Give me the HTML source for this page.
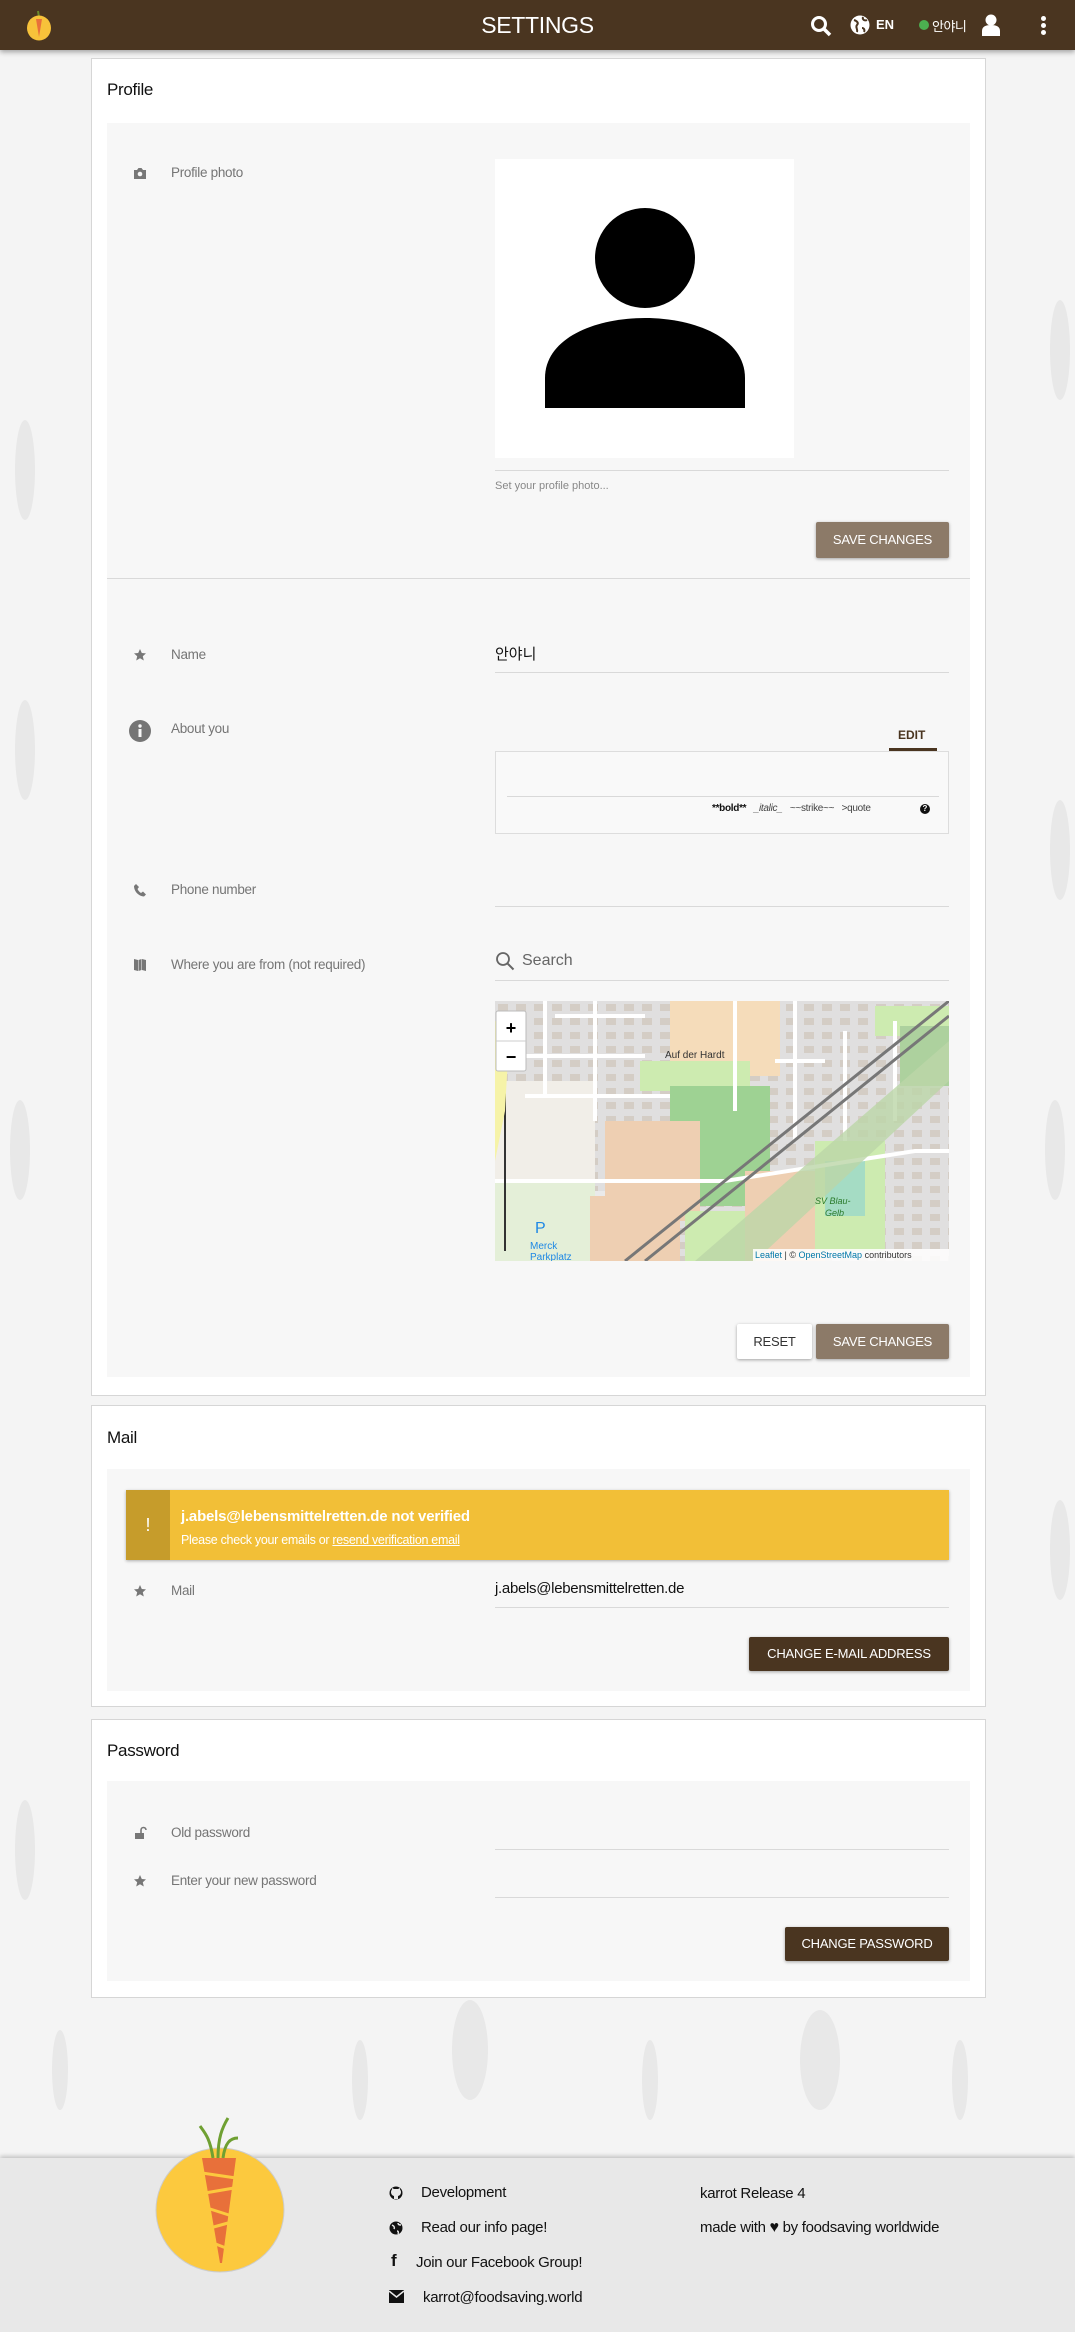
<!DOCTYPE html>
<html><head><meta charset="utf-8">
<style>
*{box-sizing:border-box;margin:0;padding:0}
body{width:1075px;height:2332px;background:#f4f4f4;font-family:"Liberation Sans","Noto Sans CJK KR",sans-serif;position:relative;overflow:hidden;color:#222}
.a{position:absolute}
.hdr{left:0;top:0;width:1075px;height:50px;background:#4a3520;box-shadow:0 2px 5px rgba(0,0,0,.35);z-index:5}
.card{background:#fff;border:1px solid #d6d6d6}
.sec{background:#f7f7f7}
.ttl{font-size:17px;color:#111;letter-spacing:-.3px}
.lbl{font-size:13.5px;color:#757575;letter-spacing:-.3px}
.ico{width:14px;height:14px;fill:#777}
.line{height:1px;background:#d9d9d9}
.btn{font-size:13px;color:#fff;text-align:center;letter-spacing:-.2px;box-shadow:0 1px 3px rgba(0,0,0,.35);border-radius:2px}
.lt{background:#8c7a68}
.dk{background:#4a3520}
.ft{font-size:15px;color:#111;letter-spacing:-.3px}
</style></head><body>
<svg class="a" style="left:0;top:50px" width="1075" height="2108">
<g fill="#e8e8e8">
<ellipse cx="25" cy="420" rx="10" ry="50"/><ellipse cx="1060" cy="300" rx="10" ry="50"/><ellipse cx="20" cy="1100" rx="10" ry="50"/><ellipse cx="1060" cy="1500" rx="10" ry="50"/>
<ellipse cx="60" cy="2020" rx="8" ry="40"/><ellipse cx="360" cy="2030" rx="8" ry="40"/><ellipse cx="470" cy="2000" rx="18" ry="50"/><ellipse cx="650" cy="2030" rx="8" ry="40"/><ellipse cx="820" cy="2010" rx="20" ry="50"/><ellipse cx="960" cy="2030" rx="8" ry="40"/>
<ellipse cx="1060" cy="800" rx="10" ry="50"/><ellipse cx="25" cy="1800" rx="10" ry="50"/><ellipse cx="25" cy="700" rx="10" ry="50"/><ellipse cx="1055" cy="1100" rx="10" ry="50"/>
</g></svg>

<div class="a hdr">
 <svg class="a" style="left:26px;top:9px" width="26" height="32" viewBox="0 0 26 32"><path d="M12 2 l1 6" stroke="#6a8a2a" stroke-width="2"/><ellipse cx="13" cy="19" rx="12" ry="12.5" fill="#f7c23a"/><path d="M10 10 h6 l-3 18z" fill="#e8703a"/></svg>
 <div class="a" style="left:0;width:1075px;top:12px;text-align:center;color:#fff;font-size:23px;letter-spacing:-.3px">SETTINGS</div>
 <svg class="a" style="left:810px;top:15px" width="22" height="22" viewBox="0 0 22 22"><circle cx="9" cy="9" r="6.5" fill="none" stroke="#fff" stroke-width="3"/><path d="M14 14l6 6" stroke="#fff" stroke-width="3.5"/></svg>
 <svg class="a" style="left:850px;top:15px" width="20" height="20" viewBox="0 0 20 20"><circle cx="10" cy="10" r="9.5" fill="#fff"/><path d="M4 5c3 1 5 3 3 5s1 4 0 7M13 2c-1 3 2 4 4 3M12 13c2 0 3 2 2 4" stroke="#4a3520" stroke-width="2" fill="none"/></svg>
 <div class="a" style="left:876px;top:17px;color:#fff;font-size:13px;font-weight:bold">EN</div>
 <div class="a" style="left:919px;top:20px;width:10px;height:10px;border-radius:50%;background:#4caf50"></div>
 <div class="a" style="left:932px;top:16px;color:#fff;font-size:13px;letter-spacing:-.5px">안야니</div>
 <svg class="a" style="left:982px;top:14px" width="18" height="22" viewBox="0 0 18 22"><circle cx="9" cy="6" r="5.5" fill="#fff"/><path d="M0 22v-5c0-4 3-6 9-6s9 2 9 6v5z" fill="#fff"/></svg>
 <div class="a" style="left:1041px;top:16px;width:5px;height:5px;background:#fff;border-radius:50%;box-shadow:0 7px 0 #fff,0 14px 0 #fff"></div>
</div>

<div class="a card" style="left:91px;top:58px;width:895px;height:1338px"></div>
<div class="a ttl" style="left:107px;top:80px">Profile</div>
<div class="a sec" style="left:107px;top:123px;width:863px;height:455px"></div>
<div class="a line" style="left:107px;top:578px;width:863px"></div>
<div class="a sec" style="left:107px;top:579px;width:863px;height:798px"></div>

<svg class="a ico" style="left:133px;top:166px" viewBox="0 0 14 14"><path d="M1 4h3l1.5-2h3L10 4h3v9H1z"/><circle cx="7" cy="8" r="2.3" fill="#f7f7f7"/></svg>
<div class="a lbl" style="left:171px;top:165px">Profile photo</div>
<div class="a" style="left:495px;top:159px;width:299px;height:299px;background:#fff"></div>
<svg class="a" style="left:545px;top:208px" width="200" height="200" viewBox="0 0 200 200"><circle cx="100" cy="50" r="50"/><path d="M0 200v-30c0-40 50-60 100-60s100 20 100 60v30z"/></svg>
<div class="a line" style="left:495px;top:470px;width:454px"></div>
<div class="a" style="left:495px;top:480px;font-size:11px;color:#888">Set your profile photo...</div>
<div class="a btn lt" style="left:816px;top:522px;width:133px;height:36px;line-height:36px">SAVE CHANGES</div>

<svg class="a ico" style="left:133px;top:648px" viewBox="0 0 14 14"><path d="M7 1l1.8 4 4.2.4-3.2 2.8 1 4.3L7 10.2 3.2 12.5l1-4.3L1 5.4l4.2-.4z"/></svg>
<div class="a lbl" style="left:171px;top:647px">Name</div>
<div class="a" style="left:495px;top:643px;font-size:15px;color:#111">안야니</div>
<div class="a line" style="left:495px;top:672px;width:454px"></div>

<svg class="a" style="left:129px;top:720px" width="22" height="22" viewBox="0 0 22 22"><circle cx="11" cy="11" r="11" fill="#757575"/><rect x="9.5" y="9" width="3" height="8" fill="#f7f7f7"/><circle cx="11" cy="6" r="1.7" fill="#f7f7f7"/></svg>
<div class="a lbl" style="left:171px;top:721px">About you</div>
<div class="a" style="left:898px;top:728px;font-size:12px;color:#4a3520;font-weight:bold">EDIT</div>
<div class="a" style="left:889px;top:748px;width:48px;height:3px;background:#4a3520"></div>
<div class="a" style="left:495px;top:751px;width:454px;height:83px;border:1px solid #ddd;background:#f9f9f9"></div>
<div class="a line" style="left:507px;top:796px;width:432px"></div>
<div class="a" style="left:712px;top:803px;font-size:10px;color:#444;white-space:nowrap;letter-spacing:-.3px"><b style="color:#111">**bold**</b> &nbsp; <i>_italic_</i> &nbsp; ~~strike~~ &nbsp; &gt;quote</div>
<div class="a" style="left:920px;top:804px;width:10px;height:10px;border-radius:50%;background:#111;color:#fff;font-size:8px;text-align:center;line-height:10px;font-weight:bold">?</div>

<svg class="a ico" style="left:133px;top:883px" viewBox="0 0 14 14"><path d="M3 1l3 3-1.5 2c1 2 2 3 3.5 4l2-1.5 3 3-2 2C5 13 1 8 1 3z"/></svg>
<div class="a lbl" style="left:171px;top:882px">Phone number</div>
<div class="a line" style="left:495px;top:906px;width:454px"></div>

<svg class="a ico" style="left:133px;top:957px" viewBox="0 0 14 14"><path d="M1 2l4 1v11l-4-1zM5.5 3l3-1v11l-3 1zM9 2l4 1v11l-4-1z"/></svg>
<div class="a lbl" style="left:171px;top:957px">Where you are from (not required)</div>
<svg class="a" style="left:495px;top:951px" width="20" height="20" viewBox="0 0 20 20"><circle cx="8" cy="8" r="6" fill="none" stroke="#666" stroke-width="1.8"/><path d="M12.5 12.5l6 6" stroke="#666" stroke-width="2"/></svg>
<div class="a" style="left:522px;top:952px;font-size:16px;color:#666">Search</div>
<div class="a line" style="left:495px;top:980px;width:454px"></div>

<svg class="a" style="left:495px;top:1001px" width="454" height="260" viewBox="0 0 454 260">
<defs><pattern id="bl" width="18" height="14" patternUnits="userSpaceOnUse"><rect width="18" height="14" fill="#e0dfdf"/><rect x="3" y="3" width="10" height="7" fill="#d4cdc5"/></pattern></defs>
<rect width="454" height="260" fill="url(#bl)"/>
<rect x="0" y="80" width="100" height="180" fill="#f1eee8"/>
<rect x="60" y="190" width="70" height="70" fill="#eaeaea"/>
<rect x="175" y="0" width="110" height="75" fill="#f5dcba"/>
<rect x="145" y="60" width="110" height="30" fill="#cdebb0"/>
<rect x="175" y="85" width="100" height="120" fill="#9ed293"/>
<rect x="110" y="120" width="95" height="100" fill="#eecfb2"/>
<rect x="0" y="180" width="100" height="80" fill="#e4efd8"/>
<rect x="95" y="195" width="90" height="65" fill="#eecfb2"/>
<rect x="190" y="210" width="60" height="50" fill="#cdebb0"/>
<rect x="250" y="170" width="80" height="90" fill="#eecfb2"/>
<rect x="320" y="140" width="70" height="110" fill="#cdebb0"/>
<rect x="330" y="160" width="40" height="55" fill="#a5dcc4"/>
<rect x="380" y="5" width="74" height="30" fill="#cdebb0"/>
<rect x="405" y="25" width="49" height="60" fill="#add19e"/>
<g stroke="#fff" stroke-width="4" fill="none">
<path d="M0 55 H150 M30 95 H175 M0 180 H230 L420 150 H454 M60 15 H150 M50 0 L50 95 M100 0 V120 M240 0 V110 M280 60 H330 M300 0 V140 M350 30 V140 M400 20 V120"/>
</g>
<path d="M200 260 L454 40 L454 80 L260 260Z" fill="#bcd6a8" opacity=".8"/>
<g stroke="#777" stroke-width="3" fill="none"><path d="M130 260 L454 0 M150 260 L454 15"/></g>
<path d="M10 50 V250" stroke="#333" stroke-width="2"/>
<path d="M0 20 L15 20 L10 110 L0 160Z" fill="#f6f3a8"/>
<rect x="1" y="10" width="30" height="60" fill="#fff" stroke="#bbb" rx="2"/>
<line x1="1" y1="40" x2="31" y2="40" stroke="#ccc"/>
<text x="16" y="33" text-anchor="middle" font-size="18" font-family="Liberation Sans" font-weight="bold">+</text>
<text x="16" y="62" text-anchor="middle" font-size="18" font-family="Liberation Sans" font-weight="bold">−</text>
<text x="40" y="232" font-size="16" fill="#1e88e5" font-family="Liberation Sans">P</text>
<text x="35" y="248" font-size="10" fill="#1e88e5" font-family="Liberation Sans">Merck</text>
<text x="35" y="259" font-size="10" fill="#1e88e5" font-family="Liberation Sans">Parkplatz</text>
<text x="170" y="57" font-size="10" fill="#333" font-family="Liberation Sans">Auf der Hardt</text>
<text x="320" y="203" font-size="9" fill="#2a7a2a" font-style="italic" font-family="Liberation Sans">SV Blau-</text>
<text x="330" y="215" font-size="9" fill="#2a7a2a" font-style="italic" font-family="Liberation Sans">Gelb</text>
<rect x="258" y="248" width="196" height="12" fill="#fff" opacity=".85"/>
<text x="260" y="257" font-size="9" fill="#333" font-family="Liberation Sans"><tspan fill="#0078a8">Leaflet</tspan> | © <tspan fill="#0078a8">OpenStreetMap</tspan> contributors</text>
</svg>

<div class="a btn" style="left:737px;top:1324px;width:75px;height:35px;line-height:35px;background:#fff;color:#333">RESET</div>
<div class="a btn lt" style="left:816px;top:1324px;width:133px;height:35px;line-height:35px">SAVE CHANGES</div>

<div class="a card" style="left:91px;top:1405px;width:895px;height:302px"></div>
<div class="a ttl" style="left:107px;top:1428px">Mail</div>
<div class="a sec" style="left:107px;top:1469px;width:863px;height:222px"></div>
<div class="a" style="left:126px;top:1490px;width:823px;height:70px;background:#f2bf37;box-shadow:0 1px 3px rgba(0,0,0,.3)"></div>
<div class="a" style="left:126px;top:1490px;width:44px;height:70px;background:#c69c2b;color:#fff;font-size:18px;text-align:center;line-height:70px">!</div>
<div class="a" style="left:181px;top:1508px;color:#fff;font-size:15px;font-weight:bold;letter-spacing:-.2px">j.abels@lebensmittelretten.de not verified</div>
<div class="a" style="left:181px;top:1533px;color:#fff;font-size:12.5px;letter-spacing:-.3px">Please check your emails or <u>resend verification email</u></div>
<svg class="a ico" style="left:133px;top:1584px" viewBox="0 0 14 14"><path d="M7 1l1.8 4 4.2.4-3.2 2.8 1 4.3L7 10.2 3.2 12.5l1-4.3L1 5.4l4.2-.4z"/></svg>
<div class="a lbl" style="left:171px;top:1583px">Mail</div>
<div class="a" style="left:495px;top:1580px;font-size:15px;color:#111;letter-spacing:-.3px">j.abels@lebensmittelretten.de</div>
<div class="a line" style="left:495px;top:1607px;width:454px"></div>
<div class="a btn dk" style="left:749px;top:1637px;width:200px;height:34px;line-height:34px">CHANGE E-MAIL ADDRESS</div>

<div class="a card" style="left:91px;top:1719px;width:895px;height:279px"></div>
<div class="a ttl" style="left:107px;top:1741px">Password</div>
<div class="a sec" style="left:107px;top:1781px;width:863px;height:200px"></div>
<svg class="a ico" style="left:133px;top:1826px" viewBox="0 0 14 14"><path d="M2 7h9v6H2z"/><path d="M8 7V4a2.5 2.5 0 015 0" fill="none" stroke="#777" stroke-width="1.6"/></svg>
<div class="a lbl" style="left:171px;top:1825px">Old password</div>
<div class="a line" style="left:495px;top:1849px;width:454px"></div>
<svg class="a ico" style="left:133px;top:1874px" viewBox="0 0 14 14"><path d="M7 1l1.8 4 4.2.4-3.2 2.8 1 4.3L7 10.2 3.2 12.5l1-4.3L1 5.4l4.2-.4z"/></svg>
<div class="a lbl" style="left:171px;top:1873px">Enter your new password</div>
<div class="a line" style="left:495px;top:1897px;width:454px"></div>
<div class="a btn dk" style="left:785px;top:1927px;width:164px;height:34px;line-height:34px">CHANGE PASSWORD</div>

<div class="a" style="left:0;top:2158px;width:1075px;height:174px;background:#e8e8e8;box-shadow:0 -2px 4px rgba(0,0,0,.2)"></div>
<svg class="a" style="left:150px;top:2108px" width="140" height="175" viewBox="0 0 140 175">
<ellipse cx="70" cy="102" rx="64" ry="62" fill="#fcc93e" stroke="#ccc" stroke-width="1"/>
<path d="M63 50 C60 30 55 25 50 18 M68 50 C68 30 72 20 78 10 M73 50 C75 35 80 30 88 30" stroke="#6fa032" stroke-width="3" fill="none"/>
<path d="M52 50 H86 L72 155 H70Z" fill="#e8703a"/>
<g stroke="#fcc93e" stroke-width="3"><path d="M52 65 L86 70 M55 85 L84 80 M57 100 L82 108 M60 120 L78 115 M63 135 L76 140"/></g>
</svg>
<svg class="a" style="left:389px;top:2186px" width="14" height="14" viewBox="0 0 14 14"><circle cx="7" cy="7" r="6.5" fill="#111"/><path d="M5 13v-3c-2-.5-3-2-3-4 0-1 .5-2 1-2.5V2l2 1h4l2-1v1.5c.5.5 1 1.5 1 2.5 0 2-1 3.5-3 4v3" fill="#e8e8e8"/></svg>
<div class="a ft" style="left:421px;top:2184px">Development</div>
<svg class="a" style="left:389px;top:2221px" width="14" height="14" viewBox="0 0 14 14"><circle cx="7" cy="7" r="6.5" fill="#111"/><path d="M3 4c2 1 3 2 2 4M9 2c0 2 2 2 3 2M8 10c1 0 2 1 1 3" stroke="#e8e8e8" stroke-width="1.5" fill="none"/></svg>
<div class="a ft" style="left:421px;top:2219px">Read our info page!</div>
<div class="a" style="left:391px;top:2251px;font-size:17px;font-weight:bold;color:#111">f</div>
<div class="a ft" style="left:416px;top:2254px">Join our Facebook Group!</div>
<svg class="a" style="left:389px;top:2290px" width="15" height="13" viewBox="0 0 15 13"><rect width="15" height="13" fill="#111"/><path d="M0 1l7.5 6L15 1" stroke="#e8e8e8" stroke-width="1.5" fill="none"/></svg>
<div class="a ft" style="left:423px;top:2289px">karrot@foodsaving.world</div>
<div class="a ft" style="left:700px;top:2185px">karrot Release 4</div>
<div class="a ft" style="left:700px;top:2219px">made with <span style="font-size:16px">♥</span> by foodsaving worldwide</div>
</body></html>
